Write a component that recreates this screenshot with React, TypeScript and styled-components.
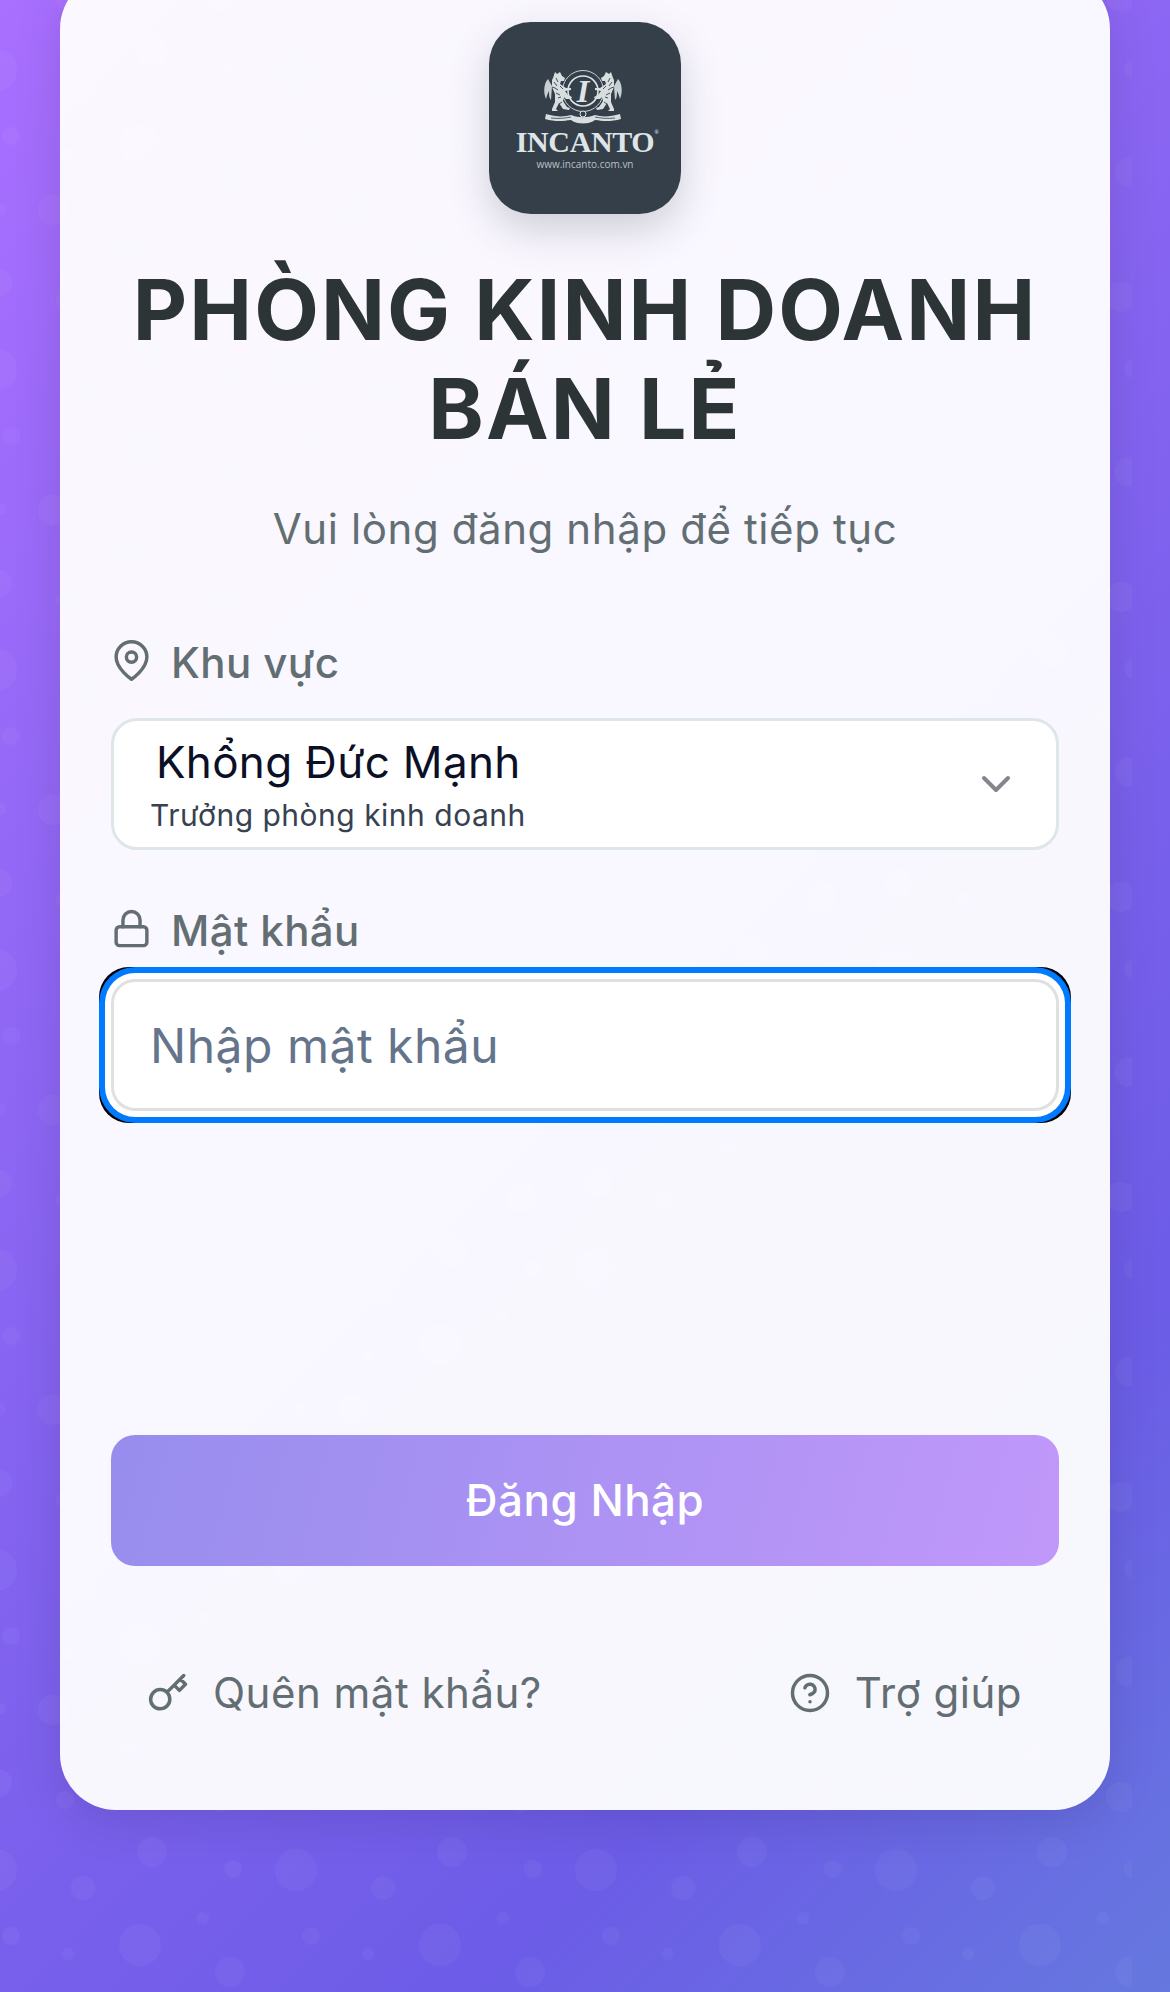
import React from 'react';
import styled, { createGlobalStyle } from 'styled-components';
import { FiChevronDown, FiHelpCircle, FiKey, FiLock, FiMapPin } from 'react-icons/fi';

const GlobalStyle = createGlobalStyle`
  html, body {
    margin: 0;
    padding: 0;
  }
  body {
    font-family: Inter, "Noto Sans", sans-serif;
  }
  * {
    box-sizing: border-box;
  }
`;

const bubbles = [
  [296, 70, 21], [-4, 70, 21], [152, 52, 15], [233, 69, 9], [83, 88, 12],
  [203, 118, 6], [11, 136, 9], [140, 145, 21], [68, 154, 6], [230, 172, 15],
  [53, 210, 15], [0, 209, 6], [300, 209, 6], [-2, 283, 14], [298, 283, 14],
  [65, 0, 9], [65, 300, 9], [221, 297, 15], [221, -3, 15], [130, 250, 12],
];

export default function App() {
  return (
    <Page>
      <GlobalStyle />
      <BubbleLayer width="1132" height="1992" aria-hidden="true">
        <defs>
          <pattern id="bubbles" width="300" height="300" patternUnits="userSpaceOnUse">
            {bubbles.map(([cx, cy, r], i) => (
              <circle key={i} cx={cx} cy={cy} r={r} fill="#fff" fillOpacity="0.035" />
            ))}
          </pattern>
        </defs>
        <rect width="1132" height="1992" fill="url(#bubbles)" />
      </BubbleLayer>

      <Card>
        <LogoTile>
          <Crest />
          <Wordmark>
            INCANTO<Registered>®</Registered>
          </Wordmark>
          <LogoUrl>www.incanto.com.vn</LogoUrl>
        </LogoTile>

        <Title>PHÒNG KINH DOANH BÁN LẺ</Title>
        <Subtitle>Vui lòng đăng nhập để tiếp tục</Subtitle>

        <Label>
          <FiMapPin size={41} />
          Khu vực
        </Label>
        <SelectBox>
          <SelectText>
            <PersonName>Khổng Đức Mạnh</PersonName>
            <PersonRole>Trưởng phòng kinh doanh</PersonRole>
          </SelectText>
          <Chevron>
            <FiChevronDown size={48} />
          </Chevron>
        </SelectBox>

        <PasswordLabel>
          <FiLock size={41} />
          Mật khẩu
        </PasswordLabel>
        <FocusRing>
          <BlueRing>
            <WhiteRing>
              <PasswordInput type="password" placeholder="Nhập mật khẩu" />
            </WhiteRing>
          </BlueRing>
        </FocusRing>

        <SubmitButton type="button">Đăng Nhập</SubmitButton>

        <LinkRow>
          <HelpLink>
            <FiKey size={42} />
            Quên mật khẩu?
          </HelpLink>
          <HelpLink>
            <FiHelpCircle size={42} />
            Trợ giúp
          </HelpLink>
        </LinkRow>
      </Card>
    </Page>
  );
}

function Lion() {
  return (
    <g>
      {/* tail */}
      <path d="M5 9c-4 4-5 13-2 20 1-4 2-6 3-8 0 4 0 7 2 9l1-14z" fill="#c9d0d3" />
      {/* body and mane */}
      <path
        d="M10 8l2-6 2 2 3-2 2 4 3 2-1 3-3 0-1 3 6 4 5 0 0 2-6 1 3 4 4 2-1 2-5 0-2-2-1 4 4 6 3 1-1 2-6-1-4-6-3 6 2 2-6 0 0-2 3-7 0-8-3-7 0-7z"
        fill="#d8dee0"
      />
      <path
        d="M13 8l2 4M11 12l3 4M12 18l3 2M13 23l4 2M15 28l3-1M17 16l3 3M19 32l-3 2M9 17l3 1"
        stroke="#343f49"
        strokeWidth="0.9"
        fill="none"
      />
    </g>
  );
}

function Crest() {
  return (
    <CrestSvg viewBox="0 0 80 55" aria-hidden="true">
      <circle cx="40" cy="21" r="20.5" fill="none" stroke="#c9d0d3" strokeWidth="1" />
      <circle cx="40" cy="21" r="15" fill="none" stroke="#dfe4e6" strokeWidth="1.6" />
      <CrestLetter x="40" y="32" textAnchor="middle">
        I
      </CrestLetter>
      <Lion />
      <g transform="matrix(-1 0 0 1 80 0)">
        <Lion />
      </g>
      <path d="M3 44c10 3 18 3 25 1 8 3 16 3 24 0 7 2 15 2 25-1l1 5c-10 3-19 2-26 1-7 5-17 5-24 0-7 1-16 2-26-1z" fill="#d8dee0" />
      <path d="M8 48c8 1 15 0 20-1M72 48c-8 1-15 0-20-1M24 51c10 4 22 4 32 0" stroke="#343f49" strokeWidth="0.8" fill="none" />
      <circle cx="40" cy="44" r="3" fill="#343f49" stroke="#dfe4e6" strokeWidth="1" />
    </CrestSvg>
  );
}

const Page = styled.div`
  position: relative;
  width: 1170px;
  height: 1992px;
  overflow: hidden;
  background: linear-gradient(135deg, #a96fff 0%, #6c5ce7 78%, #6578df 100%);
`;

const BubbleLayer = styled.svg`
  position: absolute;
  top: 0;
  left: 0;
`;

const Card = styled.div`
  position: relative;
  display: flex;
  flex-direction: column;
  width: 1050px;
  height: 1837px;
  margin: -27px 0 0 60px;
  padding: 49px 51px 0;
  border-radius: 56px;
  background: rgba(255, 255, 255, 0.95);
  box-shadow: 0 10px 50px rgba(0, 0, 0, 0.12);
`;

const LogoTile = styled.div`
  display: flex;
  flex-direction: column;
  align-items: center;
  align-self: center;
  width: 192px;
  height: 192px;
  padding-top: 48px;
  border-radius: 42px;
  background: #343f49;
  box-shadow: 0 16px 40px rgba(52, 63, 73, 0.22);
`;

const CrestSvg = styled.svg`
  display: block;
  width: 80px;
  height: 55px;
  margin-right: 4px;
`;

const CrestLetter = styled.text`
  font-family: "Liberation Serif", serif;
  font-style: italic;
  font-weight: 700;
  font-size: 32px;
  fill: #dfe4e6;
`;

const Wordmark = styled.div`
  position: relative;
  margin-top: 2px;
  font-family: "Liberation Serif", serif;
  font-weight: 700;
  font-size: 30px;
  line-height: 30px;
  letter-spacing: -0.4px;
  color: #dfe4e6;
  white-space: nowrap;
`;

const Registered = styled.span`
  position: absolute;
  top: 2px;
  left: 100%;
  font-size: 6px;
  line-height: 6px;
`;

const LogoUrl = styled.div`
  font-family: "Open Sans", sans-serif;
  font-size: 10px;
  line-height: 14px;
  color: #b9c1c5;
  white-space: nowrap;
`;

const Title = styled.h1`
  margin: 46px 0 0;
  font-size: 84px;
  font-weight: 700;
  line-height: 99px;
  letter-spacing: 2.1px;
  text-align: center;
  color: #2d3436;
`;

const Subtitle = styled.p`
  margin: 43px 0 0;
  font-size: 42px;
  line-height: 56px;
  letter-spacing: 0.6px;
  text-align: center;
  color: #636e72;
`;

const Label = styled.label`
  display: flex;
  align-items: center;
  gap: 19px;
  height: 56px;
  margin-top: 77px;
  font-size: 42px;
  font-weight: 450;
  letter-spacing: 0.4px;
  color: #636e72;
  svg {
    flex: none;
    margin-top: -4px;
  }
`;

const PasswordLabel = styled(Label)`
  margin-top: 52px;
`;

const SelectBox = styled.div`
  display: flex;
  align-items: center;
  justify-content: space-between;
  height: 132px;
  margin-top: 28px;
  padding: 0 36px;
  border: 3px solid #dfe6e9;
  border-radius: 26px;
  background: #fff;
`;

const SelectText = styled.div`
  display: flex;
  flex-direction: column;
  gap: 9px;
  padding-top: 2px;
`;

const PersonName = styled.span`
  margin-left: 6px;
  font-size: 44px;
  line-height: 50px;
  letter-spacing: 0.3px;
  color: #0b1026;
`;

const PersonRole = styled.span`
  font-size: 30px;
  line-height: 38px;
  letter-spacing: 0.5px;
  color: #374151;
`;

const Chevron = styled.span`
  display: flex;
  color: #85858d;
`;

const FocusRing = styled.div`
  margin: 9px -12px 0;
  border-radius: 30px;
  background: #000;
`;

const BlueRing = styled.div`
  padding: 6px;
  border-radius: 36px;
  background: #007aff;
`;

const WhiteRing = styled.div`
  padding: 6px;
  border-radius: 30px;
  background: #fff;
`;

const PasswordInput = styled.input`
  display: block;
  width: 100%;
  height: 132px;
  padding: 0 36px;
  border: 3px solid #e0e0e0;
  border-radius: 24px;
  outline: none;
  background: #fff;
  font-family: inherit;
  font-size: 48px;
  letter-spacing: 0.5px;
  &::placeholder {
    color: #64748b;
    opacity: 1;
  }
`;

const SubmitButton = styled.button`
  height: 131px;
  margin-top: 312px;
  padding-bottom: 2px;
  border: none;
  border-radius: 24px;
  background: linear-gradient(105deg, #978ded 0%, #c098fa 100%);
  font-family: inherit;
  font-size: 44px;
  font-weight: 500;
  letter-spacing: 0.5px;
  color: #fff;
`;

const LinkRow = styled.div`
  display: flex;
  justify-content: space-between;
  margin-top: 99px;
  padding: 0 37px 0 36px;
`;

const HelpLink = styled.a`
  display: flex;
  align-items: center;
  gap: 24px;
  font-size: 42px;
  line-height: 56px;
  letter-spacing: 0.5px;
  color: #636e72;
  svg {
    flex: none;
  }
`;
